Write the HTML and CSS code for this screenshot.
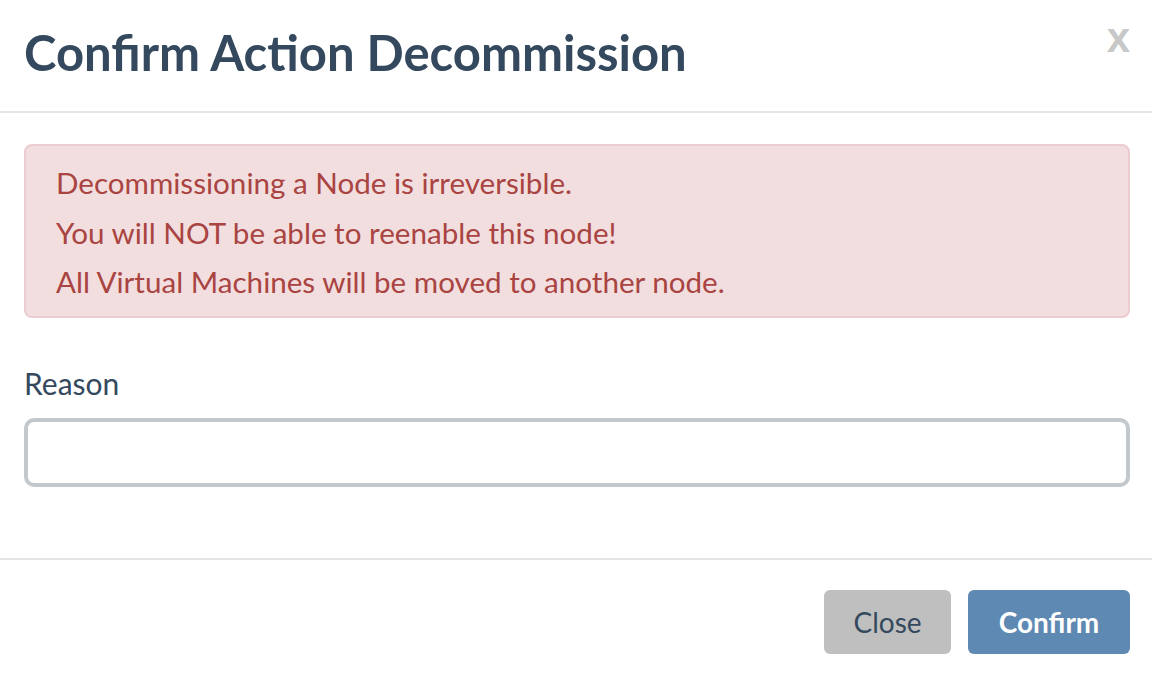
FILE: index.html
```html
<!DOCTYPE html>
<html>
<head>
<meta charset="utf-8">
<link rel="stylesheet" href="styles.css">
</head>
<body>
<div class="modal">
  <div class="modal-header">
    <h1 class="title">Confirm Action Decommission</h1>
    <span class="close-x">x</span>
  </div>
  <div class="modal-body">
    <div class="alert">
      <div class="alert-line">Decommissioning a Node is irreversible.</div>
      <div class="alert-line">You will NOT be able to reenable this node!</div>
      <div class="alert-line">All Virtual Machines will be moved to another node.</div>
    </div>
    <label class="label">Reason</label>
    <input class="input" type="text">
  </div>
  <div class="modal-footer">
    <button class="btn btn-close">Close</button>
    <button class="btn btn-confirm">Confirm</button>
  </div>
</div>
</body>
</html>
```
FILE: styles.css
```css
html, body {
  margin: 0;
  padding: 0;
  background: #fff;
}
body {
  font-family: Lato, "Open Sans", sans-serif;
  color: #34495e;
  width: 1152px;
  height: 676px;
  overflow: hidden;
}
.modal {
  display: flex;
  flex-direction: column;
}
.modal-header {
  display: flex;
  justify-content: space-between;
  align-items: flex-start;
  padding: 0 22px 0 24px;
  height: 111px;
  border-bottom: 2px solid #e5e5e5;
}
.title {
  margin: 24px 0 0 0;
  font-size: 49px;
  font-weight: 700;
  line-height: 56px;
  color: #34495e;
}
.close-x {
  margin-top: 17px;
  font-family: "Liberation Sans", Arial, sans-serif;
  font-weight: 700;
  font-size: 42px;
  line-height: 42px;
  color: #c8c8c8;
}
.modal-body {
  padding: 31px 22px 0 24px;
  height: 447px;
  box-sizing: border-box;
  border-bottom: 2px solid #e5e5e5;
  display: flex;
  flex-direction: column;
}
.alert {
  background: #f2dede;
  border: 2px solid #ebccd1;
  border-radius: 8px;
  color: #a94442;
  padding: 12px 31px 0 30px;
  font-size: 29.6px;
  height: 174px;
  box-sizing: border-box;
}
.alert-line {
  line-height: 49.5px;
}
.label {
  margin-top: 45px;
  font-size: 30px;
  line-height: 40px;
  color: #34495e;
}
.input {
  margin-top: 15px;
  height: 69px;
  box-sizing: border-box;
  border: 4px solid #c2c8cc;
  border-radius: 10px;
  background: #fff;
  font-size: 28px;
  outline: none;
}
.modal-footer {
  display: flex;
  justify-content: flex-end;
  gap: 17px;
  padding: 30px 22px 0 24px;
}
.btn {
  height: 64px;
  border: none;
  border-radius: 6px;
  font-family: Lato, "Open Sans", sans-serif;
  font-size: 28px;
  padding: 0;
}
.btn-close {
  background: #bfbfbf;
  color: #34495e;
  width: 127px;
}
.btn-confirm {
  background: #5d89b3;
  color: #fff;
  font-weight: 700;
  width: 162px;
}
```
